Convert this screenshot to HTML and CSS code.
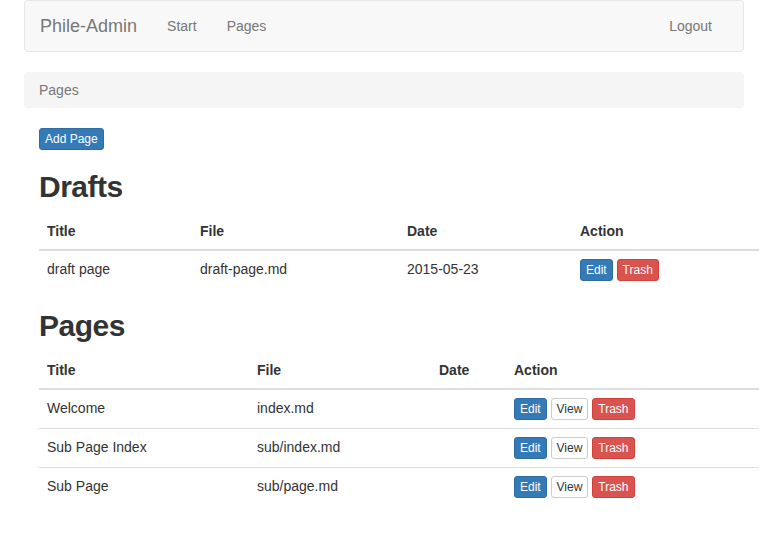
FILE: index.html
```html
<!DOCTYPE html>
<html>
<head>
<meta charset="utf-8">
<title>Phile-Admin</title>
<link rel="stylesheet" href="styles.css">
</head>
<body>
<div class="page">
  <nav class="navbar">
    <a class="brand" href="#">Phile-Admin</a>
    <ul class="nav">
      <li><a href="#">Start</a></li>
      <li><a href="#">Pages</a></li>
    </ul>
    <ul class="nav nav-right">
      <li><a href="#">Logout</a></li>
    </ul>
  </nav>
  <div class="breadcrumb">Pages</div>
  <div class="content">
    <a class="btn btn-xs btn-primary" href="#">Add Page</a>
    <h2>Drafts</h2>
    <table class="table drafts">
      <thead>
        <tr><th class="c1">Title</th><th class="c2">File</th><th class="c3">Date</th><th>Action</th></tr>
      </thead>
      <tbody>
        <tr>
          <td>draft page</td><td>draft-page.md</td><td>2015-05-23</td>
          <td><a class="btn btn-xs btn-primary" href="#">Edit</a> <a class="btn btn-xs btn-danger" href="#">Trash</a></td>
        </tr>
      </tbody>
    </table>
    <h2>Pages</h2>
    <table class="table pages">
      <thead>
        <tr><th class="c1">Title</th><th class="c2">File</th><th class="c3">Date</th><th>Action</th></tr>
      </thead>
      <tbody>
        <tr>
          <td>Welcome</td><td>index.md</td><td></td>
          <td><a class="btn btn-xs btn-primary" href="#">Edit</a> <a class="btn btn-xs btn-default" href="#">View</a> <a class="btn btn-xs btn-danger" href="#">Trash</a></td>
        </tr>
        <tr>
          <td>Sub Page Index</td><td>sub/index.md</td><td></td>
          <td><a class="btn btn-xs btn-primary" href="#">Edit</a> <a class="btn btn-xs btn-default" href="#">View</a> <a class="btn btn-xs btn-danger" href="#">Trash</a></td>
        </tr>
        <tr>
          <td>Sub Page</td><td>sub/page.md</td><td></td>
          <td><a class="btn btn-xs btn-primary" href="#">Edit</a> <a class="btn btn-xs btn-default" href="#">View</a> <a class="btn btn-xs btn-danger" href="#">Trash</a></td>
        </tr>
      </tbody>
    </table>
  </div>
</div>
</body>
</html>
```
FILE: styles.css
```css
* { box-sizing: border-box; }
html, body { margin: 0; padding: 0; background: #fff; }
body {
  font-family: "Liberation Sans", Arial, Helvetica, sans-serif;
  font-size: 14px;
  line-height: 20px;
  color: #333;
}
a { text-decoration: none; }
.page {
  margin-left: 24px;
  width: 720px;
}
.navbar {
  display: flex;
  align-items: center;
  height: 52px;
  background: #f8f8f8;
  border: 1px solid #e7e7e7;
  border-radius: 4px;
  margin-bottom: 20px;
  padding: 0 15px;
}
.brand {
  font-size: 18px;
  line-height: 20px;
  color: #777;
  padding: 15px 0;
}
.nav {
  display: flex;
  list-style: none;
  margin: 0 0 0 15px;
  padding: 0;
}
.nav a {
  display: block;
  padding: 15px;
  color: #777;
  font-size: 14px;
  line-height: 20px;
}
.nav-right { margin-left: auto; margin-right: 1px; }
.breadcrumb {
  background: #f5f5f5;
  border-radius: 4px;
  padding: 8px 15px;
  color: #777;
  margin-bottom: 20px;
  height: 36px;
}
.content {
  padding-left: 15px;
}
.btn {
  display: inline-block;
  border: 1px solid transparent;
  border-radius: 3px;
  vertical-align: top;
}
.btn-xs {
  font-size: 12px;
  line-height: 18px;
  padding: 1px 5px;
}
.btn-primary { background: #337ab7; border-color: #2e6da4; color: #fff; }
.btn-danger { background: #d9534f; border-color: #d43f3a; color: #fff; }
.btn-default { background: #fff; border-color: #ccc; color: #333; }
h2 {
  font-size: 30px;
  line-height: 33px;
  font-weight: bold;
  letter-spacing: -0.5px;
  margin: 20px 0 10px;
  color: #333;
}
.table {
  width: 720px;
  border-collapse: collapse;
  border-spacing: 0;
  margin-bottom: 20px;
  table-layout: fixed;
}
.table th, .table td {
  padding: 8px;
  text-align: left;
  vertical-align: top;
  line-height: 20px;
}
.table td { height: 38px; }
.table th {
  font-weight: bold;
  border-bottom: 2px solid #ddd;
  vertical-align: bottom;
}
.table tbody tr + tr td { border-top: 1px solid #ddd; }
.drafts .c1 { width: 153px; }
.drafts .c2 { width: 207px; }
.drafts .c3 { width: 173px; }
.pages .c1 { width: 210px; }
.pages .c2 { width: 182px; }
.pages .c3 { width: 75px; }
```
